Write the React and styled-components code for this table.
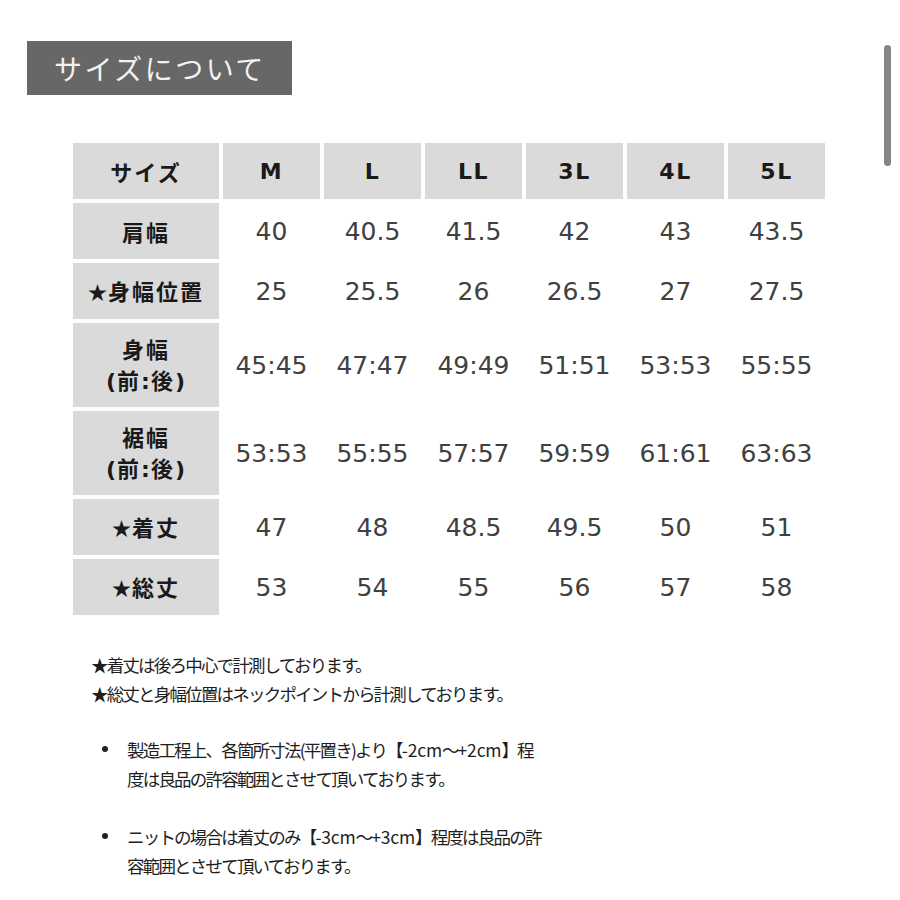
import React from 'react';
import styled, { createGlobalStyle } from 'styled-components';

const GlobalStyle = createGlobalStyle`
  html, body {
    margin: 0;
    padding: 0;
    background: #ffffff;
  }
  body {
    font-family: "DejaVu Sans", "Noto Sans CJK JP", sans-serif;
  }
`;

const Page = styled.div`
  width: 900px;
  min-height: 900px;
  box-sizing: border-box;
  padding: 41px 0 0 27px;
  position: relative;
`;

const Scrollbar = styled.div`
  position: absolute;
  top: 45px;
  right: 9px;
  width: 7px;
  height: 121px;
  border-radius: 4px;
  background: #858585;
`;

const TitleBox = styled.div`
  width: 265px;
  height: 54px;
  box-sizing: border-box;
  background: #676767;
  display: flex;
  align-items: center;
  padding-left: 27px;
  color: #f2f2f2;
  font-family: "Noto Sans CJK JP", sans-serif;
  font-weight: 400;
  font-size: 28px;
  letter-spacing: 2.5px;
`;

const Grid = styled.div`
  display: grid;
  grid-template-columns: 146px repeat(6, 97px);
  grid-template-rows: 56px 56px 56px 84px 84px 56px 56px;
  gap: 4px;
  margin: 48px 0 0 46px;
  width: max-content;
`;

const HeadCell = styled.div`
  background: #dadada;
  display: flex;
  flex-direction: column;
  align-items: center;
  justify-content: center;
  text-align: center;
  color: #1a1a1a;
  font-family: ${(p) => (p.$jp ? '"Noto Sans CJK JP"' : '"DejaVu Sans", "Noto Sans CJK JP"')}, sans-serif;
  font-weight: 700;
  font-size: 22px;
  letter-spacing: ${(p) => (p.$jp ? '2px' : '1.5px')};
  line-height: 31px;
`;

const Star = styled.span`
  font-family: "Noto Sans CJK JP", sans-serif;
  font-size: 19px;
  letter-spacing: 1px;
`;

const Paren = styled.span`
  font-family: "DejaVu Sans", sans-serif;
  letter-spacing: 1px;
`;

const DataCell = styled.div`
  display: flex;
  align-items: center;
  justify-content: center;
  color: #404040;
  font-family: "DejaVu Sans", sans-serif;
  font-size: 25px;
`;

const Notes = styled.div`
  margin: 35px 0 0 64px;
  color: #1e1e1e;
  font-family: "Noto Sans CJK JP", sans-serif;
  font-size: 17.5px;
  letter-spacing: -1.8px;
  line-height: 29px;
`;

const Latin = styled.span`
  letter-spacing: -0.2px;
`;

const Line = styled.div`
  white-space: nowrap;
`;

const BulletList = styled.ul`
  list-style: none;
  margin: 27px 0 0 0;
  padding: 0;
`;

const Bullet = styled.li`
  position: relative;
  padding-left: 36px;
  margin-bottom: 29px;
  white-space: nowrap;

  &::before {
    content: "";
    position: absolute;
    left: 11px;
    top: 11px;
    width: 6px;
    height: 6px;
    border-radius: 50%;
    background: #222222;
  }
`;

const sizes = ['M', 'L', 'LL', '3L', '4L', '5L'];

const rows = [
  { label: ['肩幅'], values: ['40', '40.5', '41.5', '42', '43', '43.5'] },
  { label: ['★', '身幅位置'], values: ['25', '25.5', '26', '26.5', '27', '27.5'] },
  { label: ['身幅'], paren: true, values: ['45:45', '47:47', '49:49', '51:51', '53:53', '55:55'] },
  { label: ['裾幅'], paren: true, values: ['53:53', '55:55', '57:57', '59:59', '61:61', '63:63'] },
  { label: ['★', '着丈'], values: ['47', '48', '48.5', '49.5', '50', '51'] },
  { label: ['★', '総丈'], values: ['53', '54', '55', '56', '57', '58'] },
];

const RowLabel = ({ row }) => (
  <HeadCell $jp>
    <div>
      {row.label.length > 1 && <Star>{row.label[0]}</Star>}
      {row.label[row.label.length - 1]}
    </div>
    {row.paren && (
      <div>
        <Paren>(</Paren>前<Paren>:</Paren>後<Paren>)</Paren>
      </div>
    )}
  </HeadCell>
);

const App = () => {
  return (
    <Page>
      <GlobalStyle />
      <Scrollbar />
      <TitleBox>サイズについて</TitleBox>

      <Grid>
        <HeadCell $jp>サイズ</HeadCell>
        {sizes.map((s) => (
          <HeadCell key={s}>{s}</HeadCell>
        ))}
        {rows.map((row, i) => (
          <React.Fragment key={i}>
            <RowLabel row={row} />
            {row.values.map((v, j) => (
              <DataCell key={j}>{v}</DataCell>
            ))}
          </React.Fragment>
        ))}
      </Grid>

      <Notes>
        <Line>★着丈は後ろ中心で計測しております。</Line>
        <Line>★総丈と身幅位置はネックポイントから計測しております。</Line>
        <BulletList>
          <Bullet>
            製造工程上、各箇所寸法(平置き)より【<Latin>-2cm</Latin>～<Latin>+2cm</Latin>】程
            <br />
            度は良品の許容範囲とさせて頂いております。
          </Bullet>
          <Bullet>
            ニットの場合は着丈のみ【<Latin>-3cm</Latin>～<Latin>+3cm</Latin>】程度は良品の許
            <br />
            容範囲とさせて頂いております。
          </Bullet>
        </BulletList>
      </Notes>
    </Page>
  );
};

export default App;
